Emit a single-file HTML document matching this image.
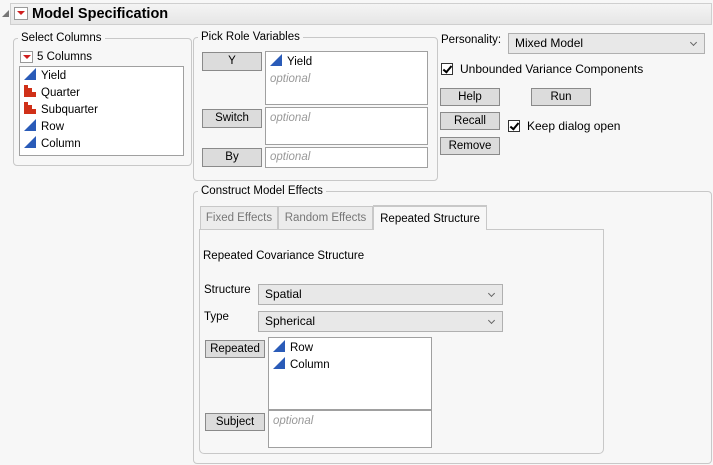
<!DOCTYPE html>
<html><head><style>
body{margin:0;width:713px;height:465px;background:#f7f7f7;font-family:"Liberation Sans",sans-serif;font-size:11.5px;color:#000;position:relative;overflow:hidden}
.a{position:absolute;white-space:nowrap}
.grp{position:absolute;border:1px solid #c8c8c8;border-radius:4px}
.gl{position:absolute;background:#f7f7f7;padding:0 3px;top:-9px;left:4px;line-height:16px;white-space:nowrap}
.btn{position:absolute;background:#dcdcdc;border:1px solid #8a8a8a;box-sizing:border-box;text-align:center;line-height:16px}
.box{position:absolute;background:#fff;border:1px solid #a0a0a0;box-sizing:border-box}
.opt{color:#999;font-style:italic}
.dd{position:absolute;background:#e8e8e8;border:1px solid #b0b0b0;box-sizing:border-box;padding-left:6px;line-height:19px;font-size:12px}
.dd:after{content:"";position:absolute;right:8px;top:6px;width:4px;height:4px;border-right:1px solid #666;border-bottom:1px solid #666;transform:rotate(45deg)}
.cb{position:absolute;width:12px;height:12px;border:1px solid #333;background:#fff;box-sizing:border-box}
.cb:after{content:"";position:absolute;left:3px;top:0px;width:3px;height:7px;border-right:2px solid #000;border-bottom:2px solid #000;transform:rotate(40deg)}
.tri{display:inline-block;width:0;height:0;border-left:12px solid transparent;border-bottom:12px solid #2a5bb8;vertical-align:-1px;margin-right:5px}
.bar{display:inline-block;width:12px;height:12px;vertical-align:-1px;margin-right:5px;position:relative}
.bar i{position:absolute;bottom:0;background:#d03018;width:4px}
.it{position:absolute;left:4px;line-height:17px;white-space:nowrap}
.red{position:absolute;width:13px;height:12px;background:#fff;border:1px solid #999;box-sizing:border-box}
.red:after{content:"";position:absolute;left:2px;top:3px;border-left:4px solid transparent;border-right:4px solid transparent;border-top:4px solid #d02020}
.tab{position:absolute;top:206px;height:23px;border:1px solid #c8c8c8;border-bottom:none;box-sizing:border-box;background:#ececec;color:#777;line-height:23px;text-align:center;white-space:nowrap;font-size:11.5px}
</style></head><body>
<div class="a" style="left:2px;top:10px;width:0;height:0;border-left:7px solid transparent;border-bottom:7px solid #777"></div>
<div class="a" style="left:10px;top:3px;width:702px;height:22px;background:linear-gradient(#f4f4f4,#e6e6e6);border:1px solid #cfcfcf;box-sizing:border-box"></div>
<div class="red" style="left:14px;top:7px;width:14px;height:13px"></div>
<div class="a" style="left:32px;top:4px;font-size:14.5px;font-weight:bold;line-height:20px">Model Specification</div>

<div class="grp" style="left:13px;top:38px;width:177px;height:126px"><div class="gl">Select Columns</div></div>
<div class="red" style="left:20px;top:51px"></div>
<div class="a" style="left:37px;top:50px;line-height:15px">5 Columns</div>
<div class="box" style="left:19px;top:66px;width:165px;height:90px">
<div class="it" style="top:1px"><span class="tri"></span>Yield</div>
<div class="it" style="top:18px"><span class="bar"><i style="left:0;height:12px"></i><i style="left:4px;height:9px"></i><i style="left:8px;height:5px"></i></span>Quarter</div>
<div class="it" style="top:35px"><span class="bar"><i style="left:0;height:12px"></i><i style="left:4px;height:9px"></i><i style="left:8px;height:5px"></i></span>Subquarter</div>
<div class="it" style="top:52px"><span class="tri"></span>Row</div>
<div class="it" style="top:69px"><span class="tri"></span>Column</div>
</div>

<div class="grp" style="left:193px;top:37px;width:243px;height:142px"><div class="gl">Pick Role Variables</div></div>
<div class="btn" style="left:202px;top:52px;width:60px;height:19px">Y</div>
<div class="box" style="left:265px;top:51px;width:163px;height:54px"><div class="it" style="top:2px"><span class="tri"></span>Yield</div><div class="it opt" style="top:19px">optional</div></div>
<div class="btn" style="left:202px;top:109px;width:60px;height:19px">Switch</div>
<div class="box" style="left:265px;top:107px;width:163px;height:38px"><div class="it opt" style="top:2px">optional</div></div>
<div class="btn" style="left:202px;top:148px;width:60px;height:19px">By</div>
<div class="box" style="left:265px;top:147px;width:163px;height:21px"><div class="it opt" style="top:1px">optional</div></div>

<div class="a" style="left:441px;top:32px;line-height:16px">Personality:</div>
<div class="dd" style="left:508px;top:33px;width:197px;height:21px">Mixed Model</div>
<div class="cb" style="left:441px;top:63px"></div>
<div class="a" style="left:460px;top:61px;line-height:16px;font-size:12px">Unbounded Variance Components</div>
<div class="btn" style="left:440px;top:88px;width:60px;height:18px">Help</div>
<div class="btn" style="left:531px;top:88px;width:60px;height:18px">Run</div>
<div class="btn" style="left:440px;top:112px;width:60px;height:18px">Recall</div>
<div class="cb" style="left:508px;top:120px"></div>
<div class="a" style="left:527px;top:118px;line-height:16px;font-size:12px">Keep dialog open</div>
<div class="btn" style="left:440px;top:137px;width:60px;height:18px">Remove</div>

<div class="grp" style="left:193px;top:191px;width:517px;height:271px"><div class="gl">Construct Model Effects</div></div>
<div class="tab" style="left:200px;width:78px">Fixed Effects</div>
<div class="tab" style="left:278px;width:95px">Random Effects</div>
<div class="a" style="left:199px;top:229px;width:405px;height:225px;border:1px solid #c8c8c8;border-radius:0 0 5px 5px;background:#f7f7f7;box-sizing:border-box"></div>
<div class="tab" style="left:373px;width:114px;top:205px;height:25px;background:#f7f7f7;color:#000;border-top:2px solid #c8c8c8;line-height:24px">Repeated Structure</div>
<div class="a" style="left:487px;top:229px;width:117px;height:1px;background:#c8c8c8"></div>
<div class="a" style="left:203px;top:248px;line-height:16px">Repeated Covariance Structure</div>
<div class="a" style="left:204px;top:282px;line-height:16px">Structure</div>
<div class="dd" style="left:258px;top:284px;width:245px;height:21px">Spatial</div>
<div class="a" style="left:204px;top:309px;line-height:16px">Type</div>
<div class="dd" style="left:258px;top:311px;width:245px;height:21px">Spherical</div>
<div class="btn" style="left:205px;top:340px;width:60px;height:18px">Repeated</div>
<div class="box" style="left:268px;top:337px;width:164px;height:73px"><div class="it" style="top:2px"><span class="tri"></span>Row</div><div class="it" style="top:19px"><span class="tri"></span>Column</div></div>
<div class="btn" style="left:205px;top:413px;width:60px;height:18px">Subject</div>
<div class="box" style="left:268px;top:410px;width:164px;height:38px"><div class="it opt" style="top:2px">optional</div></div>
</body></html>
